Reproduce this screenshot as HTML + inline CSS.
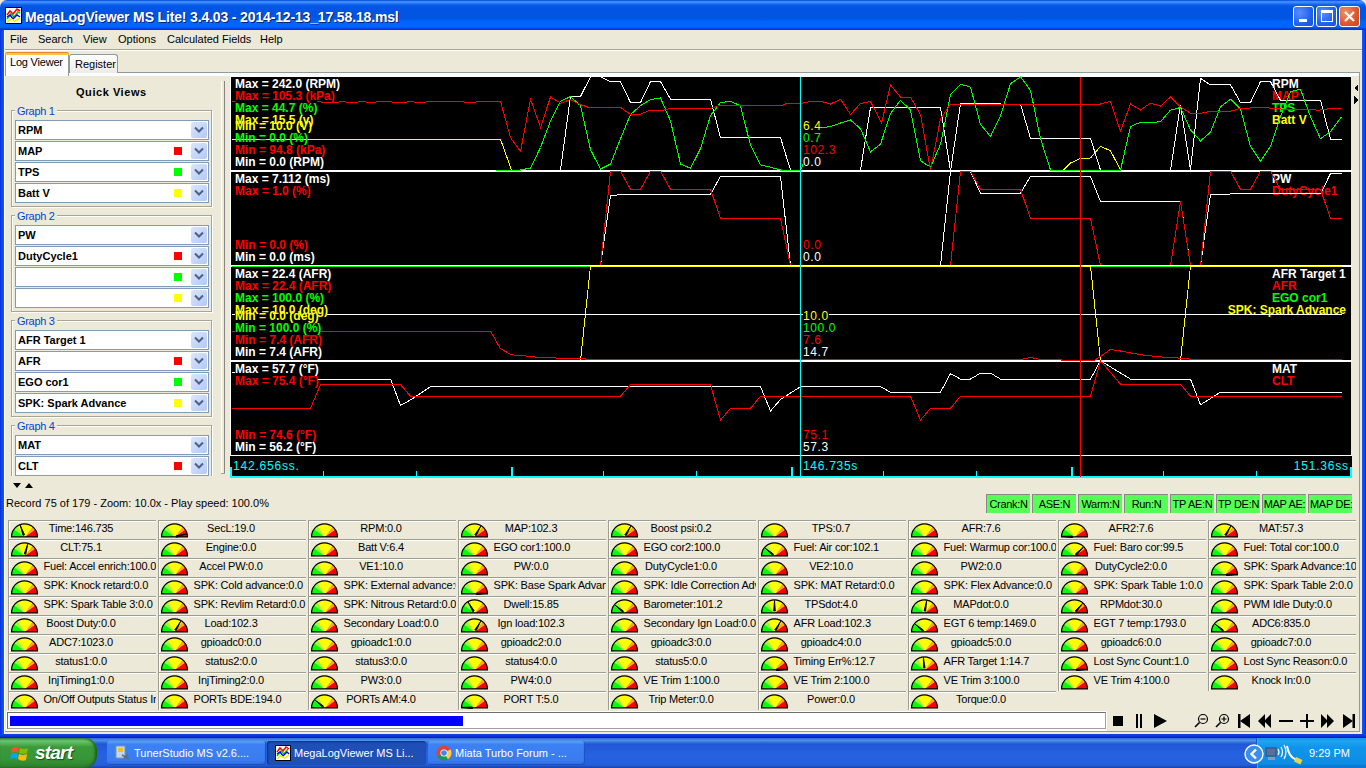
<!DOCTYPE html><html><head><meta charset="utf-8"><style>
*{margin:0;padding:0;box-sizing:border-box}
html,body{width:1366px;height:768px;overflow:hidden;background:#ECE9D8;font-family:"Liberation Sans",sans-serif;font-size:11px;color:#000}
.a{position:absolute}
.t{position:absolute;white-space:nowrap}
.cb{position:absolute;left:15px;width:194px;height:20px;border:1px solid #7F9DB9;background:#fff;font-weight:bold;font-size:11px;padding:4px 0 0 2px;line-height:11px}
.cb .dd{position:absolute;right:1px;top:1px;width:16px;height:16px;border-radius:2px;background:linear-gradient(135deg,#dbe6fd,#b3c8f5)}
.cb .sq{position:absolute;left:158px;top:5px;width:8px;height:8px}
.gb{position:absolute;left:11px;width:201px;height:97px;border:1px solid #A8A593;box-shadow:inset 1px 1px #fff,1px 1px #fff}
.gl{position:absolute;left:3px;top:-6px;letter-spacing:-0.3px;background:#ECE9D8;color:#0046D5;padding:0 2px;font-size:11px;line-height:12px}
.cell{position:absolute;width:150px;height:19px;border-top:1px solid #9d9d92;border-left:1px solid #9d9d92;box-shadow:inset 1px 1px #fff}
.cell span{position:absolute;top:1px;line-height:12px;white-space:nowrap;font-size:11px;letter-spacing:-0.2px}
.ind{position:absolute;top:494px;width:44px;height:19px;background:#55FF55;border-top:1px solid #888;border-left:1px solid #888;font-size:11px;line-height:12px;padding-top:3px;text-align:center;white-space:nowrap;overflow:hidden;letter-spacing:-0.3px}
.cl{font-weight:bold;font-size:12px;line-height:12px}
</style></head><body>
<div class="a" style="left:0;top:0;width:1366px;height:30px;background:linear-gradient(#0040E0 0px,#3C8CFF 1.5px,#3A88FF 2.5px,#0A5CEA 5px,#0055E2 8px,#0054E0 17px,#005CEE 20px,#0066FF 22px,#0064FD 27px,#0048E0 28.5px,#0030C0 30px);border-radius:7px 7px 0 0"></div><svg class="a" style="left:5px;top:7px" width="17" height="17" viewBox="0 0 17 17"><rect x="0.5" y="0.5" width="16" height="16" fill="#fff" stroke="#000"/><polyline points="2,8 5,4 8,7 12,2 15,4" fill="none" stroke="#f00" stroke-width="1.6"/><polyline points="2,12 6,7 9,10 13,5 15,6" fill="none" stroke="#0c0" stroke-width="1.6"/><polyline points="2,10 5,8 8,12 12,8 15,10" fill="none" stroke="#00f" stroke-width="1.4"/><polyline points="2,15 6,12 10,14 15,11" fill="none" stroke="#ee0" stroke-width="1.6"/></svg><div class="t" style="left:25px;top:9px;color:#fff;font-weight:bold;font-size:14px;line-height:17px;letter-spacing:-0.15px;text-shadow:1px 1px #0A1E7A">MegaLogViewer MS Lite! 3.4.03 - 2014-12-13_17.58.18.msl</div><div class="a" style="left:1293px;top:6px;width:21px;height:21px;border:1px solid #fff;border-radius:3px;background:radial-gradient(circle at 30% 30%,#5b8ffb,#2260f0 60%,#1a4fd6)"><div class="a" style="left:5px;top:12px;width:8px;height:3px;background:#fff"></div></div><div class="a" style="left:1316px;top:6px;width:21px;height:21px;border:1px solid #fff;border-radius:3px;background:radial-gradient(circle at 30% 30%,#5b8ffb,#2260f0 60%,#1a4fd6)"><div class="a" style="left:4px;top:3px;width:12px;height:12px;border:1px solid #fff;border-top-width:3px"></div></div><div class="a" style="left:1339px;top:6px;width:21px;height:21px;border:1px solid #fff;border-radius:3px;background:radial-gradient(circle at 30% 30%,#f3906b,#e2532a 60%,#c8451f)"><svg class="a" style="left:3px;top:3px" width="13" height="13"><path d="M2,2 L11,11 M11,2 L2,11" stroke="#fff" stroke-width="2.2"/></svg></div><div class="a" style="left:0;top:30px;width:4px;height:708px;background:linear-gradient(90deg,#0831D9,#0F48EA 50%,#1757F5)"></div><div class="a" style="left:1362px;top:30px;width:4px;height:708px;background:linear-gradient(90deg,#1757F5,#0F48EA 50%,#0831D9)"></div><div class="a" style="left:0;top:734px;width:1366px;height:4px;background:linear-gradient(#0F48EA,#0831D9 60%,#001EA0)"></div><div class="a" style="left:4px;top:30px;width:1px;height:704px;background:#fff"></div><div class="t" style="left:10px;top:33px;font-size:11px;line-height:12px">File</div><div class="t" style="left:38px;top:33px;font-size:11px;line-height:12px">Search</div><div class="t" style="left:83px;top:33px;font-size:11px;line-height:12px">View</div><div class="t" style="left:118px;top:33px;font-size:11px;line-height:12px">Options</div><div class="t" style="left:167px;top:33px;font-size:11px;line-height:12px">Calculated Fields</div><div class="t" style="left:260px;top:33px;font-size:11px;line-height:12px">Help</div><div class="a" style="left:5px;top:49px;width:1357px;height:1px;background:#AAA58F"></div><div class="a" style="left:5px;top:50px;width:1357px;height:1px;background:#fff"></div><div class="a" style="left:5px;top:72px;width:1355px;height:1px;background:#919B9C"></div><div class="a" style="left:5px;top:73px;width:1354px;height:3px;background:#FCFCFE"></div><div class="a" style="left:69px;top:54px;width:49px;height:19px;border:1px solid #919B9C;border-bottom:none;border-radius:3px 3px 0 0;background:linear-gradient(#fff,#ECEBE6)"></div><div class="t" style="left:75px;top:58px">Register</div><div class="a" style="left:5px;top:52px;width:64px;height:24px;border:1px solid #919B9C;border-bottom:none;border-top:none;border-radius:3px 3px 0 0;background:#FCFCFE"></div><div class="a" style="left:5px;top:52px;width:64px;height:3px;background:#FFC83C;border-radius:3px 3px 0 0;border-top:1px solid #E68B2C"></div><div class="t" style="left:10px;top:56px;letter-spacing:-0.2px">Log Viewer</div><div class="a" style="left:1359px;top:73px;width:1px;height:659px;background:#919B9C"></div><div class="a" style="left:5px;top:731px;width:1354px;height:1px;background:#919B9C"></div><div class="t" style="left:76px;top:86px;font-weight:bold;font-size:11px;line-height:12px;letter-spacing:0.55px">Quick Views</div><div class="a" style="left:5px;top:76px;width:216px;height:400px;overflow:hidden"><div class="gb" style="left:6px;top:34px"><div class="gl">Graph 1</div></div><div class="cb" style="left:10px;top:44px">RPM<div class="dd"><svg class="a" style="left:3px;top:4px" width="10" height="8"><path d="M1,1.5 L5,5.5 L9,1.5" fill="none" stroke="#4D6185" stroke-width="2"/></svg></div></div><div class="cb" style="left:10px;top:65px">MAP<div class="sq" style="background:#f00"></div><div class="dd"><svg class="a" style="left:3px;top:4px" width="10" height="8"><path d="M1,1.5 L5,5.5 L9,1.5" fill="none" stroke="#4D6185" stroke-width="2"/></svg></div></div><div class="cb" style="left:10px;top:86px">TPS<div class="sq" style="background:#0f0"></div><div class="dd"><svg class="a" style="left:3px;top:4px" width="10" height="8"><path d="M1,1.5 L5,5.5 L9,1.5" fill="none" stroke="#4D6185" stroke-width="2"/></svg></div></div><div class="cb" style="left:10px;top:107px">Batt V<div class="sq" style="background:#ff0"></div><div class="dd"><svg class="a" style="left:3px;top:4px" width="10" height="8"><path d="M1,1.5 L5,5.5 L9,1.5" fill="none" stroke="#4D6185" stroke-width="2"/></svg></div></div><div class="gb" style="left:6px;top:139px"><div class="gl">Graph 2</div></div><div class="cb" style="left:10px;top:149px">PW<div class="dd"><svg class="a" style="left:3px;top:4px" width="10" height="8"><path d="M1,1.5 L5,5.5 L9,1.5" fill="none" stroke="#4D6185" stroke-width="2"/></svg></div></div><div class="cb" style="left:10px;top:170px">DutyCycle1<div class="sq" style="background:#f00"></div><div class="dd"><svg class="a" style="left:3px;top:4px" width="10" height="8"><path d="M1,1.5 L5,5.5 L9,1.5" fill="none" stroke="#4D6185" stroke-width="2"/></svg></div></div><div class="cb" style="left:10px;top:191px"><div class="sq" style="background:#0f0"></div><div class="dd"><svg class="a" style="left:3px;top:4px" width="10" height="8"><path d="M1,1.5 L5,5.5 L9,1.5" fill="none" stroke="#4D6185" stroke-width="2"/></svg></div></div><div class="cb" style="left:10px;top:212px"><div class="sq" style="background:#ff0"></div><div class="dd"><svg class="a" style="left:3px;top:4px" width="10" height="8"><path d="M1,1.5 L5,5.5 L9,1.5" fill="none" stroke="#4D6185" stroke-width="2"/></svg></div></div><div class="gb" style="left:6px;top:244px"><div class="gl">Graph 3</div></div><div class="cb" style="left:10px;top:254px">AFR Target 1<div class="dd"><svg class="a" style="left:3px;top:4px" width="10" height="8"><path d="M1,1.5 L5,5.5 L9,1.5" fill="none" stroke="#4D6185" stroke-width="2"/></svg></div></div><div class="cb" style="left:10px;top:275px">AFR<div class="sq" style="background:#f00"></div><div class="dd"><svg class="a" style="left:3px;top:4px" width="10" height="8"><path d="M1,1.5 L5,5.5 L9,1.5" fill="none" stroke="#4D6185" stroke-width="2"/></svg></div></div><div class="cb" style="left:10px;top:296px">EGO cor1<div class="sq" style="background:#0f0"></div><div class="dd"><svg class="a" style="left:3px;top:4px" width="10" height="8"><path d="M1,1.5 L5,5.5 L9,1.5" fill="none" stroke="#4D6185" stroke-width="2"/></svg></div></div><div class="cb" style="left:10px;top:317px">SPK: Spark Advance<div class="sq" style="background:#ff0"></div><div class="dd"><svg class="a" style="left:3px;top:4px" width="10" height="8"><path d="M1,1.5 L5,5.5 L9,1.5" fill="none" stroke="#4D6185" stroke-width="2"/></svg></div></div><div class="gb" style="left:6px;top:349px"><div class="gl">Graph 4</div></div><div class="cb" style="left:10px;top:359px">MAT<div class="dd"><svg class="a" style="left:3px;top:4px" width="10" height="8"><path d="M1,1.5 L5,5.5 L9,1.5" fill="none" stroke="#4D6185" stroke-width="2"/></svg></div></div><div class="cb" style="left:10px;top:380px">CLT<div class="sq" style="background:#f00"></div><div class="dd"><svg class="a" style="left:3px;top:4px" width="10" height="8"><path d="M1,1.5 L5,5.5 L9,1.5" fill="none" stroke="#4D6185" stroke-width="2"/></svg></div></div><div class="cb" style="left:10px;top:401px"><div class="dd"><svg class="a" style="left:3px;top:4px" width="10" height="8"><path d="M1,1.5 L5,5.5 L9,1.5" fill="none" stroke="#4D6185" stroke-width="2"/></svg></div></div><div class="cb" style="left:10px;top:422px"><div class="dd"><svg class="a" style="left:3px;top:4px" width="10" height="8"><path d="M1,1.5 L5,5.5 L9,1.5" fill="none" stroke="#4D6185" stroke-width="2"/></svg></div></div></div><div class="a" style="left:221px;top:81px;width:1px;height:393px;background:#fff"></div><div class="a" style="left:224px;top:81px;width:1px;height:393px;background:#858585"></div><div class="a" style="left:221px;top:473px;width:4px;height:1px;background:#A0A0A0"></div><svg class="a" style="left:13px;top:483px" width="24" height="6"><path d="M0,0 L8,0 L4,5Z M12,5 L20,5 L16,0Z" fill="#000"/></svg><svg class="a" style="left:230px;top:76px" width="1130" height="402" viewBox="230 76 1130 402" shape-rendering="crispEdges"><rect x="231" y="77" width="1120" height="378" fill="#000"/><rect x="230" y="76" width="1" height="380" fill="#fff"/><rect x="230" y="76" width="1122" height="1" fill="#fff"/><rect x="231" y="170" width="1121" height="1.5" fill="#fff"/><rect x="231" y="265" width="1121" height="1.5" fill="#fff"/><rect x="231" y="360" width="1121" height="1.5" fill="#fff"/><rect x="231" y="455" width="1121" height="1.5" fill="#fff"/><rect x="1352" y="77" width="6" height="400" fill="#ECE9D8"/><path d="M1358,84 L1354,88 L1358,92Z M1354,96 L1358,100 L1354,104Z" fill="#000"/><rect x="230" y="456" width="1122" height="21" fill="#000"/><rect x="230" y="476" width="1122" height="1.5" fill="#0ff"/><rect x="230" y="467" width="2" height="10" fill="#0ff"/><rect x="511" y="467" width="2" height="10" fill="#0ff"/><rect x="791" y="467" width="2" height="10" fill="#0ff"/><rect x="1071" y="467" width="2" height="10" fill="#0ff"/><rect x="1350" y="467" width="2" height="10" fill="#0ff"/><rect x="323" y="471" width="1" height="6" fill="#0ff"/><rect x="416" y="471" width="1" height="6" fill="#0ff"/><rect x="603" y="471" width="1" height="6" fill="#0ff"/><rect x="696" y="471" width="1" height="6" fill="#0ff"/><rect x="883" y="471" width="1" height="6" fill="#0ff"/><rect x="976" y="471" width="1" height="6" fill="#0ff"/><rect x="1163" y="471" width="1" height="6" fill="#0ff"/><rect x="1256" y="471" width="1" height="6" fill="#0ff"/></svg><div class="t" style="left:1272px;top:78px;color:#fff;font-weight:bold;font-size:12px;line-height:13px;">RPM</div><div class="t" style="left:1272px;top:90px;color:#f00;font-weight:bold;font-size:12px;line-height:13px;">MAP</div><div class="t" style="left:1272px;top:102px;color:#0f0;font-weight:bold;font-size:12px;line-height:13px;">TPS</div><div class="t" style="left:1272px;top:114px;color:#ff0;font-weight:bold;font-size:12px;line-height:13px;">Batt V</div><div class="t" style="left:1272px;top:173px;color:#fff;font-weight:bold;font-size:12px;line-height:13px;">PW</div><div class="t" style="left:1272px;top:185px;color:#f00;font-weight:bold;font-size:12px;line-height:13px;">DutyCycle1</div><div class="t" style="left:1272px;top:268px;color:#fff;font-weight:bold;font-size:12px;line-height:13px;">AFR Target 1</div><div class="t" style="left:1272px;top:280px;color:#f00;font-weight:bold;font-size:12px;line-height:13px;">AFR</div><div class="t" style="left:1272px;top:292px;color:#0f0;font-weight:bold;font-size:12px;line-height:13px;">EGO cor1</div><div class="t" style="left:1272px;top:363px;color:#fff;font-weight:bold;font-size:12px;line-height:13px;">MAT</div><div class="t" style="left:1272px;top:375px;color:#f00;font-weight:bold;font-size:12px;line-height:13px;">CLT</div><div class="t" style="right:20px;top:304px;color:#ff0;font-weight:bold;font-size:12px;line-height:13px;">SPK: Spark Advance</div><svg class="a" style="left:230px;top:76px" width="1130" height="402" viewBox="230 76 1130 402" shape-rendering="crispEdges"><polyline points="231.5,139.4 500.5,139.4 511.5,170" fill="none" stroke="#ff0" stroke-width="1"/><polyline points="1063.5,170 1070.5,163 1080.5,158.5 1090.5,158 1100.5,146.4 1110.5,150.8 1120.5,170" fill="none" stroke="#ff0" stroke-width="1"/><polyline points="560.5,170 570.5,96.5 580.5,96.5 590.5,76.8 600.5,76.8 610.5,81.6 620.5,81.6 630.5,102.5 640.5,102.5 650.5,81.6 660.5,81.6 670.5,99.2 710.5,99.2 720.5,137.6 780.5,137.6 790.5,170 860.5,170 870.5,107.5 940.5,107.5 950.5,171 960.5,103.6 1020.5,104.2 1030.5,138.3 1090.5,138.3 1100.5,170 1170.5,170 1180.5,104.7 1190.5,170 1200.5,78.3 1210.5,84.9 1230.5,84.9 1240.5,102.5 1250.5,102.5 1260.5,81.6 1270.5,81.6 1280.5,100.3 1320.5,100.3 1330.5,139.1 1341.5,139.1" fill="none" stroke="#fff" stroke-width="1"/><polyline points="495.5,170 520.5,170 530.5,168 540.5,147.5 550.5,121 560.5,101.4 570.5,96.5 580.5,105.7 590.5,149.7 600.5,169 610.5,164 620.5,138.7 630.5,114.5 640.5,105.7 650.5,99.6 660.5,98 670.5,121 680.5,164 690.5,168.3 700.5,148.6 710.5,115.6 720.5,102.5 730.5,101.4 740.5,105.7 750.5,145.3 760.5,165 770.5,167.2 780.5,170 800.5,170 810.5,148 820.5,127.7 830.5,126.6 840.5,123 850.5,120 860.5,128.8 870.5,151.9 880.5,144.2 890.5,113.4 900.5,100.3 910.5,110.1 920.5,160.7 930.5,167.2 940.5,144.2 950.5,94.8 960.5,84.2 970.5,87.1 980.5,124.4 990.5,136.5 1000.5,115.6 1010.5,83.8 1020.5,76.8 1030.5,90.4 1040.5,138.7 1050.5,170 1120.5,170 1130.5,126.6 1140.5,122.2 1150.5,122.9 1160.5,121.6 1170.5,110.1 1180.5,107.5 1190.5,129.9 1200.5,140.9 1210.5,132.1 1220.5,106.8 1230.5,99.2 1240.5,109 1250.5,146.4 1260.5,161.1 1270.5,146.4 1280.5,116.7 1290.5,91.5 1300.5,89.3 1310.5,116.7 1320.5,138.7 1330.5,131.7 1341.5,116.7" fill="none" stroke="#0f0" stroke-width="1"/><polyline points="231.5,101 234.5,101" fill="none" stroke="#f00" stroke-width="1"/><polyline points="316.5,101.7 333.5,103 342.5,101.4 351.5,103 362.5,101.4 371.5,103 379.5,101.4 390.5,101.8 401.5,103 410.5,101.4 419.5,103 430.5,101.4 460.5,101.4 469.5,103 480.5,101.4 500.5,101.4 510.5,137.6 520.5,151.4 530.5,99.2 540.5,127.3 550.5,97 560.5,103.1 570.5,99.6 580.5,104.7 590.5,108 605.5,107.3 620.5,107.3 630.5,114.5 640.5,114.1 650.5,110.1 663.5,110.1 670.5,108.4 710.5,108.4 720.5,105.3 782.5,105.3 786.5,103.6 800.5,103.6 810.5,101.4 820.5,101.4 830.5,104 840.5,99.2 850.5,114.5 860.5,103.6 870.5,101.4 881.5,123.3 890.5,84.9 900.5,97 910.5,97 920.5,114.5 930.5,169.9 940.5,118.9 950.5,104 1100.5,104 1110.5,101.4 1120.5,131 1130.5,104 1140.5,110.1 1150.5,103.1 1160.5,106.2 1170.5,97 1180.5,106.8 1190.5,113.4 1200.5,113.4 1210.5,111.2 1230.5,111.2 1240.5,108.4 1262.5,107.5 1280.5,109 1319.5,110.1 1330.5,108.4 1341.5,108.4" fill="none" stroke="#f00" stroke-width="1"/><polyline points="600.5,265.5 610.5,195.5 625.5,194.4 710.5,194.4 720.5,176.3 780.5,176.3 790.5,265.5 940.5,265.5 950.5,171.3 970.5,171.3 980.5,193.3 1020.5,193.3 1030.5,176.3 1090.5,176.3 1100.5,201.4 1180.5,201.4 1190.5,265.5 1200.5,265.5 1210.5,194.4 1235.5,193.9 1320.5,193.9 1330.5,173.5 1341.5,173.5" fill="none" stroke="#fff" stroke-width="1"/><polyline points="600.5,265.5 610.5,171.3 620.5,171.3 630.5,189.3 640.5,189.3 650.5,171.3 660.5,171.3 670.5,189.3 710.5,189.3 720.5,218.5 780.5,218.5 790.5,265.5 950.5,265.5 960.5,171.3 970.5,171.3 980.5,189.3 1020.5,189.3 1030.5,218.5 1090.5,218.5 1100.5,265.5 1170.5,265.5 1180.5,201.4 1190.5,265.5 1200.5,265.5 1210.5,171.3 1230.5,171.3 1240.5,189.3 1250.5,189.3 1260.5,171.3 1270.5,171.3 1280.5,189.3 1320.5,189.3 1330.5,218.5 1341.5,218.5" fill="none" stroke="#f00" stroke-width="1"/><polyline points="231.5,266 1341.5,266" fill="none" stroke="#0f0" stroke-width="1"/><polyline points="580.5,360.5 590.5,266 1090.5,266 1100.5,360.5 1180.5,360.5 1190.5,266 1341.5,266" fill="none" stroke="#ff0" stroke-width="1"/><polyline points="231.5,314.3 234.5,314.3" fill="none" stroke="#fff" stroke-width="1"/><polyline points="326.5,314.3 1341.5,314.3" fill="none" stroke="#fff" stroke-width="1"/><polyline points="231.5,331.5 234.5,331.5" fill="none" stroke="#f00" stroke-width="1"/><polyline points="320.5,331.5 344.5,331.8 355.5,331.2 490.5,331.2 500.5,348.8 510.5,354.2 515.5,355.3 525.5,356 535.5,357.1 555.5,358 584.5,358.5 586.5,359.5 1020.5,359.5 1030.5,357.5 1040.5,359.5 1060.5,359.5 1062.5,360.5 1094.5,360.5 1110.5,349.4 1120.5,351 1140.5,354.7 1160.5,356.9 1180.5,358.2 1194.5,359.5 1341.5,359.5" fill="none" stroke="#f00" stroke-width="1"/><polyline points="231.5,372.5 234.5,372.5" fill="none" stroke="#fff" stroke-width="1"/><polyline points="316.5,379 390.5,379 400.5,405.4 410.5,399.9 430.5,386.7 760.5,386.7 770.5,410.9 780.5,399.5 790.5,393 800.5,386.7 880.5,386.7 890.5,392.2 940.5,392.2 950.5,373.6 960.5,379.1 970.5,379.1 980.5,373.1 990.5,373.1 1000.5,379.1 1090.5,379.1 1100.5,360.8 1130.5,379.1 1190.5,379.1 1200.5,404.8 1220.5,392.2 1341.5,392.2" fill="none" stroke="#fff" stroke-width="1"/><polyline points="231.5,408.3 310.5,408.3 320.5,384.6 400.5,384.6 410.5,396.2 620.5,396.2 630.5,384.6 710.5,384.6 720.5,420.1 730.5,408.3 750.5,408.3 760.5,396.2 910.5,396.2 920.5,420.1 930.5,408.3 950.5,408.3 960.5,396.2 1090.5,396.2 1100.5,360.8 1120.5,384.1 1180.5,384.1 1190.5,396.2 1341.5,396.2" fill="none" stroke="#f00" stroke-width="1"/><rect x="231" y="265" width="1121" height="1" fill="#fff"/><rect x="1101" y="360" width="80" height="2" fill="#fff"/><rect x="800" y="77" width="1" height="400" fill="#0ff"/><rect x="1080" y="77" width="1" height="400" fill="#f00"/></svg><div class="t" style="left:235px;top:78px;color:#fff;font-weight:bold;font-size:12px;line-height:13px;">Max = 242.0 (RPM)</div><div class="t" style="left:235px;top:90px;color:#f00;font-weight:bold;font-size:12px;line-height:13px;">Max = 105.3 (kPa)</div><div class="t" style="left:235px;top:102px;color:#0f0;font-weight:bold;font-size:12px;line-height:13px;">Max = 44.7 (%)</div><div class="t" style="left:235px;top:114px;color:#ff0;font-weight:bold;font-size:12px;line-height:13px;">Max = 15.5 (v)</div><div class="t" style="left:235px;top:120px;color:#ff0;font-weight:bold;font-size:12px;line-height:13px;">Min = 10.0 (V)</div><div class="t" style="left:235px;top:132px;color:#0f0;font-weight:bold;font-size:12px;line-height:13px;">Min = 0.0 (%)</div><div class="t" style="left:235px;top:144px;color:#f00;font-weight:bold;font-size:12px;line-height:13px;">Min = 94.8 (kPa)</div><div class="t" style="left:235px;top:156px;color:#fff;font-weight:bold;font-size:12px;line-height:13px;">Min = 0.0 (RPM)</div><div class="t" style="left:235px;top:173px;color:#fff;font-weight:bold;font-size:12px;line-height:13px;">Max = 7.112 (ms)</div><div class="t" style="left:235px;top:185px;color:#f00;font-weight:bold;font-size:12px;line-height:13px;">Max = 1.0 (%)</div><div class="t" style="left:235px;top:239px;color:#f00;font-weight:bold;font-size:12px;line-height:13px;">Min = 0.0 (%)</div><div class="t" style="left:235px;top:251px;color:#fff;font-weight:bold;font-size:12px;line-height:13px;">Min = 0.0 (ms)</div><div class="t" style="left:235px;top:268px;color:#fff;font-weight:bold;font-size:12px;line-height:13px;">Max = 22.4 (AFR)</div><div class="t" style="left:235px;top:280px;color:#f00;font-weight:bold;font-size:12px;line-height:13px;">Max = 22.4 (AFR)</div><div class="t" style="left:235px;top:292px;color:#0f0;font-weight:bold;font-size:12px;line-height:13px;">Max = 100.0 (%)</div><div class="t" style="left:235px;top:304px;color:#ff0;font-weight:bold;font-size:12px;line-height:13px;">Max = 10.0 (deg)</div><div class="t" style="left:235px;top:310px;color:#ff0;font-weight:bold;font-size:12px;line-height:13px;">Min = 0.0 (deg)</div><div class="t" style="left:235px;top:322px;color:#0f0;font-weight:bold;font-size:12px;line-height:13px;">Min = 100.0 (%)</div><div class="t" style="left:235px;top:334px;color:#f00;font-weight:bold;font-size:12px;line-height:13px;">Min = 7.4 (AFR)</div><div class="t" style="left:235px;top:346px;color:#fff;font-weight:bold;font-size:12px;line-height:13px;">Min = 7.4 (AFR)</div><div class="t" style="left:235px;top:363px;color:#fff;font-weight:bold;font-size:12px;line-height:13px;">Max = 57.7 (°F)</div><div class="t" style="left:235px;top:375px;color:#f00;font-weight:bold;font-size:12px;line-height:13px;">Max = 75.4 (°F)</div><div class="t" style="left:235px;top:429px;color:#f00;font-weight:bold;font-size:12px;line-height:13px;">Min = 74.6 (°F)</div><div class="t" style="left:235px;top:441px;color:#fff;font-weight:bold;font-size:12px;line-height:13px;">Min = 56.2 (°F)</div><div class="t" style="left:803px;top:120px;color:#ff0;font-size:12px;line-height:13px;background:#000;letter-spacing:0.6px;">6.4</div><div class="t" style="left:803px;top:132px;color:#0f0;font-size:12px;line-height:13px;background:#000;letter-spacing:0.6px;">0.7</div><div class="t" style="left:803px;top:144px;color:#f00;font-size:12px;line-height:13px;background:#000;letter-spacing:0.6px;">102.3</div><div class="t" style="left:803px;top:156px;color:#fff;font-size:12px;line-height:13px;background:#000;letter-spacing:0.6px;">0.0</div><div class="t" style="left:803px;top:239px;color:#f00;font-size:12px;line-height:13px;background:#000;letter-spacing:0.6px;">0.0</div><div class="t" style="left:803px;top:251px;color:#fff;font-size:12px;line-height:13px;background:#000;letter-spacing:0.6px;">0.0</div><div class="t" style="left:803px;top:310px;color:#ff0;font-size:12px;line-height:13px;background:#000;letter-spacing:0.6px;">10.0</div><div class="t" style="left:803px;top:322px;color:#0f0;font-size:12px;line-height:13px;background:#000;letter-spacing:0.6px;">100.0</div><div class="t" style="left:803px;top:334px;color:#f00;font-size:12px;line-height:13px;background:#000;letter-spacing:0.6px;">7.6</div><div class="t" style="left:803px;top:346px;color:#fff;font-size:12px;line-height:13px;background:#000;letter-spacing:0.6px;">14.7</div><div class="t" style="left:803px;top:429px;color:#f00;font-size:12px;line-height:13px;background:#000;letter-spacing:0.6px;">75.1</div><div class="t" style="left:803px;top:441px;color:#fff;font-size:12px;line-height:13px;background:#000;letter-spacing:0.6px;">57.3</div><div class="t" style="left:233px;top:460px;color:#0ff;font-size:12px;line-height:13px;letter-spacing:0.8px;">142.656ss.</div><div class="t" style="left:803px;top:460px;color:#0ff;font-size:12px;line-height:13px;letter-spacing:0.7px;">146.735s</div><div class="t" style="right:13px;top:460px;color:#0ff;font-size:12px;line-height:13px;letter-spacing:0.8px;">151.36ss.</div><div class="t" style="left:6px;top:497px;font-size:11px;line-height:12px">Record 75 of 179 - Zoom: 10.0x - Play speed: 100.0%</div><div class="ind" style="left:986px;width:44px;">Crank:N</div><div class="ind" style="left:1032px;width:44px;">ASE:N</div><div class="ind" style="left:1078px;width:44px;">Warm:N</div><div class="ind" style="left:1124px;width:44px;">Run:N</div><div class="ind" style="left:1170px;width:44px;">TP AE:N</div><div class="ind" style="left:1216px;width:44px;">TP DE:N</div><div class="ind" style="left:1262px;width:44px;">MAP AE:</div><div class="ind" style="left:1308px;width:44px;text-align:left;padding-left:1px;">MAP DE:N</div><svg width="0" height="0" style="position:absolute"><defs><g id="gg"><path d="M0,0 L13.00,-0.00 A13,13 0 0,0 10.65,-7.46Z" fill="#f00"/><path d="M0,0 L10.65,-7.46 A13,13 0 0,0 8.00,-10.24Z" fill="#FFAA00"/><path d="M0,0 L8.00,-10.24 A13,13 0 0,0 -6.89,-11.02Z" fill="#ff0"/><path d="M0,0 L-6.89,-11.02 A13,13 0 0,0 -10.52,-7.64Z" fill="#99FF33"/><path d="M0,0 L-10.52,-7.64 A13,13 0 0,0 -13.00,-0.00Z" fill="#0f0"/><path d="M-13,-0.2 A13,13 0 0,1 13,-0.2 Z" fill="none" stroke="#000" stroke-width="1.3"/></g></defs></svg><div class="cell" style="left:8px;top:520px;width:148px;overflow:hidden"><svg class="a" style="left:2px;top:2px" width="27" height="15" viewBox="-13.5 -14 27 15"><use href="#gg"/><path d="M0.07,-2.15 L-4.28,-11.75 L-1.44,-1.61Z" stroke="#000" stroke-width="0.9" fill="#000"/></svg><span style="left:39.8px">Time:146.735</span></div><div class="cell" style="left:158px;top:520px;width:148px;overflow:hidden"><svg class="a" style="left:2px;top:2px" width="27" height="15" viewBox="-13.5 -14 27 15"><use href="#gg"/><path d="M2.14,0.26 L12.07,-3.24 L1.72,-1.29Z" stroke="#000" stroke-width="0.9" fill="#000"/></svg><span style="left:48.1px">SecL:19.0</span></div><div class="cell" style="left:308px;top:520px;width:148px;overflow:hidden"><svg class="a" style="left:2px;top:2px" width="27" height="15" viewBox="-13.5 -14 27 15"><use href="#gg"/></svg><span style="left:51.3px">RPM:0.0</span></div><div class="cell" style="left:458px;top:520px;width:148px;overflow:hidden"><svg class="a" style="left:2px;top:2px" width="27" height="15" viewBox="-13.5 -14 27 15"><use href="#gg"/><path d="M1.69,-1.33 L6.25,-10.83 L0.31,-2.13Z" stroke="#000" stroke-width="0.9" fill="#000"/></svg><span style="left:45.7px">MAP:102.3</span></div><div class="cell" style="left:608px;top:520px;width:148px;overflow:hidden"><svg class="a" style="left:2px;top:2px" width="27" height="15" viewBox="-13.5 -14 27 15"><use href="#gg"/><path d="M1.69,-1.33 L6.25,-10.83 L0.31,-2.13Z" stroke="#000" stroke-width="0.9" fill="#000"/></svg><span style="left:41.5px">Boost psi:0.2</span></div><div class="cell" style="left:758px;top:520px;width:148px;overflow:hidden"><svg class="a" style="left:2px;top:2px" width="27" height="15" viewBox="-13.5 -14 27 15"><use href="#gg"/></svg><span style="left:52.8px">TPS:0.7</span></div><div class="cell" style="left:908px;top:520px;width:148px;overflow:hidden"><svg class="a" style="left:2px;top:2px" width="27" height="15" viewBox="-13.5 -14 27 15"><use href="#gg"/></svg><span style="left:52.5px">AFR:7.6</span></div><div class="cell" style="left:1058px;top:520px;width:148px;overflow:hidden"><svg class="a" style="left:2px;top:2px" width="27" height="15" viewBox="-13.5 -14 27 15"><use href="#gg"/><path d="M-1.96,-0.90 L-12.48,-0.65 L-2.04,0.69Z" stroke="#000" stroke-width="0.9" fill="#000"/></svg><span style="left:49.6px">AFR2:7.6</span></div><div class="cell" style="left:1208px;top:520px;width:148px;overflow:hidden"><svg class="a" style="left:2px;top:2px" width="27" height="15" viewBox="-13.5 -14 27 15"><use href="#gg"/><path d="M1.69,-1.33 L6.25,-10.83 L0.31,-2.13Z" stroke="#000" stroke-width="0.9" fill="#000"/></svg><span style="left:50.0px">MAT:57.3</span></div><div class="cell" style="left:8px;top:539px;width:148px;overflow:hidden"><svg class="a" style="left:2px;top:2px" width="27" height="15" viewBox="-13.5 -14 27 15"><use href="#gg"/><path d="M1.29,-1.72 L3.24,-12.07 L-0.26,-2.14Z" stroke="#000" stroke-width="0.9" fill="#000"/></svg><span style="left:51.2px">CLT:75.1</span></div><div class="cell" style="left:158px;top:539px;width:148px;overflow:hidden"><svg class="a" style="left:2px;top:2px" width="27" height="15" viewBox="-13.5 -14 27 15"><use href="#gg"/></svg><span style="left:46.7px">Engine:0.0</span></div><div class="cell" style="left:308px;top:539px;width:148px;overflow:hidden"><svg class="a" style="left:2px;top:2px" width="27" height="15" viewBox="-13.5 -14 27 15"><use href="#gg"/></svg><span style="left:49.0px">Batt V:6.4</span></div><div class="cell" style="left:458px;top:539px;width:148px;overflow:hidden"><svg class="a" style="left:2px;top:2px" width="27" height="15" viewBox="-13.5 -14 27 15"><use href="#gg"/></svg><span style="left:34.5px">EGO cor1:100.0</span></div><div class="cell" style="left:608px;top:539px;width:148px;overflow:hidden"><svg class="a" style="left:2px;top:2px" width="27" height="15" viewBox="-13.5 -14 27 15"><use href="#gg"/></svg><span style="left:34.5px">EGO cor2:100.0</span></div><div class="cell" style="left:758px;top:539px;width:148px;overflow:hidden"><svg class="a" style="left:2px;top:2px" width="27" height="15" viewBox="-13.5 -14 27 15"><use href="#gg"/><path d="M-1.02,-1.90 L-9.58,-8.03 L-2.05,-0.67Z" stroke="#000" stroke-width="0.9" fill="#000"/></svg><span style="left:34.5px">Fuel: Air cor:102.1</span></div><div class="cell" style="left:908px;top:539px;width:148px;overflow:hidden"><svg class="a" style="left:2px;top:2px" width="27" height="15" viewBox="-13.5 -14 27 15"><use href="#gg"/></svg><span style="left:34.5px">Fuel: Warmup cor:100.0</span></div><div class="cell" style="left:1058px;top:539px;width:148px;overflow:hidden"><svg class="a" style="left:2px;top:2px" width="27" height="15" viewBox="-13.5 -14 27 15"><use href="#gg"/><path d="M1.98,-0.85 L8.84,-8.84 L0.85,-1.98Z" stroke="#000" stroke-width="0.9" fill="#000"/></svg><span style="left:34.5px">Fuel: Baro cor:99.5</span></div><div class="cell" style="left:1208px;top:539px;width:148px;overflow:hidden"><svg class="a" style="left:2px;top:2px" width="27" height="15" viewBox="-13.5 -14 27 15"><use href="#gg"/></svg><span style="left:34.5px">Fuel: Total cor:100.0</span></div><div class="cell" style="left:8px;top:558px;width:148px;overflow:hidden"><svg class="a" style="left:2px;top:2px" width="27" height="15" viewBox="-13.5 -14 27 15"><use href="#gg"/></svg><span style="left:34.5px">Fuel: Accel enrich:100.0</span></div><div class="cell" style="left:158px;top:558px;width:148px;overflow:hidden"><svg class="a" style="left:2px;top:2px" width="27" height="15" viewBox="-13.5 -14 27 15"><use href="#gg"/></svg><span style="left:40.3px">Accel PW:0.0</span></div><div class="cell" style="left:308px;top:558px;width:148px;overflow:hidden"><svg class="a" style="left:2px;top:2px" width="27" height="15" viewBox="-13.5 -14 27 15"><use href="#gg"/></svg><span style="left:50.2px">VE1:10.0</span></div><div class="cell" style="left:458px;top:558px;width:148px;overflow:hidden"><svg class="a" style="left:2px;top:2px" width="27" height="15" viewBox="-13.5 -14 27 15"><use href="#gg"/></svg><span style="left:54.7px">PW:0.0</span></div><div class="cell" style="left:608px;top:558px;width:148px;overflow:hidden"><svg class="a" style="left:2px;top:2px" width="27" height="15" viewBox="-13.5 -14 27 15"><use href="#gg"/></svg><span style="left:36.1px">DutyCycle1:0.0</span></div><div class="cell" style="left:758px;top:558px;width:148px;overflow:hidden"><svg class="a" style="left:2px;top:2px" width="27" height="15" viewBox="-13.5 -14 27 15"><use href="#gg"/></svg><span style="left:50.2px">VE2:10.0</span></div><div class="cell" style="left:908px;top:558px;width:148px;overflow:hidden"><svg class="a" style="left:2px;top:2px" width="27" height="15" viewBox="-13.5 -14 27 15"><use href="#gg"/></svg><span style="left:51.6px">PW2:0.0</span></div><div class="cell" style="left:1058px;top:558px;width:148px;overflow:hidden"><svg class="a" style="left:2px;top:2px" width="27" height="15" viewBox="-13.5 -14 27 15"><use href="#gg"/></svg><span style="left:36.1px">DutyCycle2:0.0</span></div><div class="cell" style="left:1208px;top:558px;width:148px;overflow:hidden"><svg class="a" style="left:2px;top:2px" width="27" height="15" viewBox="-13.5 -14 27 15"><use href="#gg"/><path d="M2.04,0.69 L12.48,-0.65 L1.96,-0.90Z" stroke="#000" stroke-width="0.9" fill="#000"/></svg><span style="left:34.5px">SPK: Spark Advance:10.0</span></div><div class="cell" style="left:8px;top:577px;width:148px;overflow:hidden"><svg class="a" style="left:2px;top:2px" width="27" height="15" viewBox="-13.5 -14 27 15"><use href="#gg"/></svg><span style="left:34.5px">SPK: Knock retard:0.0</span></div><div class="cell" style="left:158px;top:577px;width:148px;overflow:hidden"><svg class="a" style="left:2px;top:2px" width="27" height="15" viewBox="-13.5 -14 27 15"><use href="#gg"/></svg><span style="left:34.5px">SPK: Cold advance:0.0</span></div><div class="cell" style="left:308px;top:577px;width:148px;overflow:hidden"><svg class="a" style="left:2px;top:2px" width="27" height="15" viewBox="-13.5 -14 27 15"><use href="#gg"/></svg><span style="left:34.5px">SPK: External advance:0.0</span></div><div class="cell" style="left:458px;top:577px;width:148px;overflow:hidden"><svg class="a" style="left:2px;top:2px" width="27" height="15" viewBox="-13.5 -14 27 15"><use href="#gg"/><path d="M2.04,0.69 L12.48,-0.65 L1.96,-0.90Z" stroke="#000" stroke-width="0.9" fill="#000"/></svg><span style="left:34.5px">SPK: Base Spark Advance:10.0</span></div><div class="cell" style="left:608px;top:577px;width:148px;overflow:hidden"><svg class="a" style="left:2px;top:2px" width="27" height="15" viewBox="-13.5 -14 27 15"><use href="#gg"/></svg><span style="left:34.5px">SPK: Idle Correction Advance:0.0</span></div><div class="cell" style="left:758px;top:577px;width:148px;overflow:hidden"><svg class="a" style="left:2px;top:2px" width="27" height="15" viewBox="-13.5 -14 27 15"><use href="#gg"/></svg><span style="left:34.5px">SPK: MAT Retard:0.0</span></div><div class="cell" style="left:908px;top:577px;width:148px;overflow:hidden"><svg class="a" style="left:2px;top:2px" width="27" height="15" viewBox="-13.5 -14 27 15"><use href="#gg"/></svg><span style="left:34.5px">SPK: Flex Advance:0.0</span></div><div class="cell" style="left:1058px;top:577px;width:148px;overflow:hidden"><svg class="a" style="left:2px;top:2px" width="27" height="15" viewBox="-13.5 -14 27 15"><use href="#gg"/></svg><span style="left:34.5px">SPK: Spark Table 1:0.0</span></div><div class="cell" style="left:1208px;top:577px;width:148px;overflow:hidden"><svg class="a" style="left:2px;top:2px" width="27" height="15" viewBox="-13.5 -14 27 15"><use href="#gg"/></svg><span style="left:34.5px">SPK: Spark Table 2:0.0</span></div><div class="cell" style="left:8px;top:596px;width:148px;overflow:hidden"><svg class="a" style="left:2px;top:2px" width="27" height="15" viewBox="-13.5 -14 27 15"><use href="#gg"/></svg><span style="left:34.5px">SPK: Spark Table 3:0.0</span></div><div class="cell" style="left:158px;top:596px;width:148px;overflow:hidden"><svg class="a" style="left:2px;top:2px" width="27" height="15" viewBox="-13.5 -14 27 15"><use href="#gg"/></svg><span style="left:34.5px">SPK: Revlim Retard:0.0</span></div><div class="cell" style="left:308px;top:596px;width:148px;overflow:hidden"><svg class="a" style="left:2px;top:2px" width="27" height="15" viewBox="-13.5 -14 27 15"><use href="#gg"/></svg><span style="left:34.5px">SPK: Nitrous Retard:0.0</span></div><div class="cell" style="left:458px;top:596px;width:148px;overflow:hidden"><svg class="a" style="left:2px;top:2px" width="27" height="15" viewBox="-13.5 -14 27 15"><use href="#gg"/><path d="M-0.31,-2.13 L-6.25,-10.83 L-1.69,-1.33Z" stroke="#000" stroke-width="0.9" fill="#000"/></svg><span style="left:44.4px">Dwell:15.85</span></div><div class="cell" style="left:608px;top:596px;width:148px;overflow:hidden"><svg class="a" style="left:2px;top:2px" width="27" height="15" viewBox="-13.5 -14 27 15"><use href="#gg"/><path d="M-1.02,-1.90 L-9.58,-8.03 L-2.05,-0.67Z" stroke="#000" stroke-width="0.9" fill="#000"/></svg><span style="left:34.5px">Barometer:101.2</span></div><div class="cell" style="left:758px;top:596px;width:148px;overflow:hidden"><svg class="a" style="left:2px;top:2px" width="27" height="15" viewBox="-13.5 -14 27 15"><use href="#gg"/><path d="M0.80,-2.00 L0.00,-12.50 L-0.80,-2.00Z" stroke="#000" stroke-width="0.9" fill="#000"/></svg><span style="left:45.5px">TPSdot:4.0</span></div><div class="cell" style="left:908px;top:596px;width:148px;overflow:hidden"><svg class="a" style="left:2px;top:2px" width="27" height="15" viewBox="-13.5 -14 27 15"><use href="#gg"/><path d="M1.14,-1.83 L2.17,-12.31 L-0.44,-2.11Z" stroke="#000" stroke-width="0.9" fill="#000"/></svg><span style="left:44.3px">MAPdot:0.0</span></div><div class="cell" style="left:1058px;top:596px;width:148px;overflow:hidden"><svg class="a" style="left:2px;top:2px" width="27" height="15" viewBox="-13.5 -14 27 15"><use href="#gg"/><path d="M1.90,-1.02 L8.03,-9.58 L0.67,-2.05Z" stroke="#000" stroke-width="0.9" fill="#000"/></svg><span style="left:41.0px">RPMdot:30.0</span></div><div class="cell" style="left:1208px;top:596px;width:148px;overflow:hidden"><svg class="a" style="left:2px;top:2px" width="27" height="15" viewBox="-13.5 -14 27 15"><use href="#gg"/></svg><span style="left:34.5px">PWM Idle Duty:0.0</span></div><div class="cell" style="left:8px;top:615px;width:148px;overflow:hidden"><svg class="a" style="left:2px;top:2px" width="27" height="15" viewBox="-13.5 -14 27 15"><use href="#gg"/></svg><span style="left:37.3px">Boost Duty:0.0</span></div><div class="cell" style="left:158px;top:615px;width:148px;overflow:hidden"><svg class="a" style="left:2px;top:2px" width="27" height="15" viewBox="-13.5 -14 27 15"><use href="#gg"/><path d="M1.69,-1.33 L6.25,-10.83 L0.31,-2.13Z" stroke="#000" stroke-width="0.9" fill="#000"/></svg><span style="left:45.5px">Load:102.3</span></div><div class="cell" style="left:308px;top:615px;width:148px;overflow:hidden"><svg class="a" style="left:2px;top:2px" width="27" height="15" viewBox="-13.5 -14 27 15"><use href="#gg"/></svg><span style="left:34.5px">Secondary Load:0.0</span></div><div class="cell" style="left:458px;top:615px;width:148px;overflow:hidden"><svg class="a" style="left:2px;top:2px" width="27" height="15" viewBox="-13.5 -14 27 15"><use href="#gg"/><path d="M1.69,-1.33 L6.25,-10.83 L0.31,-2.13Z" stroke="#000" stroke-width="0.9" fill="#000"/></svg><span style="left:38.5px">Ign load:102.3</span></div><div class="cell" style="left:608px;top:615px;width:148px;overflow:hidden"><svg class="a" style="left:2px;top:2px" width="27" height="15" viewBox="-13.5 -14 27 15"><use href="#gg"/></svg><span style="left:34.5px">Secondary Ign Load:0.0</span></div><div class="cell" style="left:758px;top:615px;width:148px;overflow:hidden"><svg class="a" style="left:2px;top:2px" width="27" height="15" viewBox="-13.5 -14 27 15"><use href="#gg"/><path d="M1.69,-1.33 L6.25,-10.83 L0.31,-2.13Z" stroke="#000" stroke-width="0.9" fill="#000"/></svg><span style="left:34.5px">AFR Load:102.3</span></div><div class="cell" style="left:908px;top:615px;width:148px;overflow:hidden"><svg class="a" style="left:2px;top:2px" width="27" height="15" viewBox="-13.5 -14 27 15"><use href="#gg"/><path d="M-1.02,-1.90 L-9.58,-8.03 L-2.05,-0.67Z" stroke="#000" stroke-width="0.9" fill="#000"/></svg><span style="left:34.5px">EGT 6 temp:1469.0</span></div><div class="cell" style="left:1058px;top:615px;width:148px;overflow:hidden"><svg class="a" style="left:2px;top:2px" width="27" height="15" viewBox="-13.5 -14 27 15"><use href="#gg"/></svg><span style="left:34.5px">EGT 7 temp:1793.0</span></div><div class="cell" style="left:1208px;top:615px;width:148px;overflow:hidden"><svg class="a" style="left:2px;top:2px" width="27" height="15" viewBox="-13.5 -14 27 15"><use href="#gg"/><path d="M-1.02,-1.90 L-9.58,-8.03 L-2.05,-0.67Z" stroke="#000" stroke-width="0.9" fill="#000"/></svg><span style="left:43.0px">ADC6:835.0</span></div><div class="cell" style="left:8px;top:634px;width:148px;overflow:hidden"><svg class="a" style="left:2px;top:2px" width="27" height="15" viewBox="-13.5 -14 27 15"><use href="#gg"/></svg><span style="left:40.1px">ADC7:1023.0</span></div><div class="cell" style="left:158px;top:634px;width:148px;overflow:hidden"><svg class="a" style="left:2px;top:2px" width="27" height="15" viewBox="-13.5 -14 27 15"><use href="#gg"/></svg><span style="left:41.7px">gpioadc0:0.0</span></div><div class="cell" style="left:308px;top:634px;width:148px;overflow:hidden"><svg class="a" style="left:2px;top:2px" width="27" height="15" viewBox="-13.5 -14 27 15"><use href="#gg"/></svg><span style="left:41.7px">gpioadc1:0.0</span></div><div class="cell" style="left:458px;top:634px;width:148px;overflow:hidden"><svg class="a" style="left:2px;top:2px" width="27" height="15" viewBox="-13.5 -14 27 15"><use href="#gg"/></svg><span style="left:41.7px">gpioadc2:0.0</span></div><div class="cell" style="left:608px;top:634px;width:148px;overflow:hidden"><svg class="a" style="left:2px;top:2px" width="27" height="15" viewBox="-13.5 -14 27 15"><use href="#gg"/></svg><span style="left:41.7px">gpioadc3:0.0</span></div><div class="cell" style="left:758px;top:634px;width:148px;overflow:hidden"><svg class="a" style="left:2px;top:2px" width="27" height="15" viewBox="-13.5 -14 27 15"><use href="#gg"/></svg><span style="left:41.7px">gpioadc4:0.0</span></div><div class="cell" style="left:908px;top:634px;width:148px;overflow:hidden"><svg class="a" style="left:2px;top:2px" width="27" height="15" viewBox="-13.5 -14 27 15"><use href="#gg"/></svg><span style="left:41.7px">gpioadc5:0.0</span></div><div class="cell" style="left:1058px;top:634px;width:148px;overflow:hidden"><svg class="a" style="left:2px;top:2px" width="27" height="15" viewBox="-13.5 -14 27 15"><use href="#gg"/></svg><span style="left:41.7px">gpioadc6:0.0</span></div><div class="cell" style="left:1208px;top:634px;width:148px;overflow:hidden"><svg class="a" style="left:2px;top:2px" width="27" height="15" viewBox="-13.5 -14 27 15"><use href="#gg"/></svg><span style="left:41.7px">gpioadc7:0.0</span></div><div class="cell" style="left:8px;top:653px;width:148px;overflow:hidden"><svg class="a" style="left:2px;top:2px" width="27" height="15" viewBox="-13.5 -14 27 15"><use href="#gg"/></svg><span style="left:46.2px">status1:0.0</span></div><div class="cell" style="left:158px;top:653px;width:148px;overflow:hidden"><svg class="a" style="left:2px;top:2px" width="27" height="15" viewBox="-13.5 -14 27 15"><use href="#gg"/></svg><span style="left:46.2px">status2:0.0</span></div><div class="cell" style="left:308px;top:653px;width:148px;overflow:hidden"><svg class="a" style="left:2px;top:2px" width="27" height="15" viewBox="-13.5 -14 27 15"><use href="#gg"/></svg><span style="left:46.2px">status3:0.0</span></div><div class="cell" style="left:458px;top:653px;width:148px;overflow:hidden"><svg class="a" style="left:2px;top:2px" width="27" height="15" viewBox="-13.5 -14 27 15"><use href="#gg"/></svg><span style="left:46.2px">status4:0.0</span></div><div class="cell" style="left:608px;top:653px;width:148px;overflow:hidden"><svg class="a" style="left:2px;top:2px" width="27" height="15" viewBox="-13.5 -14 27 15"><use href="#gg"/></svg><span style="left:46.2px">status5:0.0</span></div><div class="cell" style="left:758px;top:653px;width:148px;overflow:hidden"><svg class="a" style="left:2px;top:2px" width="27" height="15" viewBox="-13.5 -14 27 15"><use href="#gg"/><path d="M2.04,0.69 L12.48,-0.65 L1.96,-0.90Z" stroke="#000" stroke-width="0.9" fill="#000"/></svg><span style="left:34.5px">Timing Err%:12.7</span></div><div class="cell" style="left:908px;top:653px;width:148px;overflow:hidden"><svg class="a" style="left:2px;top:2px" width="27" height="15" viewBox="-13.5 -14 27 15"><use href="#gg"/><path d="M0.62,-2.06 L-1.09,-12.45 L-0.97,-1.92Z" stroke="#000" stroke-width="0.9" fill="#000"/></svg><span style="left:34.5px">AFR Target 1:14.7</span></div><div class="cell" style="left:1058px;top:653px;width:148px;overflow:hidden"><svg class="a" style="left:2px;top:2px" width="27" height="15" viewBox="-13.5 -14 27 15"><use href="#gg"/><path d="M2.04,0.69 L12.48,-0.65 L1.96,-0.90Z" stroke="#000" stroke-width="0.9" fill="#000"/></svg><span style="left:34.5px">Lost Sync Count:1.0</span></div><div class="cell" style="left:1208px;top:653px;width:148px;overflow:hidden"><svg class="a" style="left:2px;top:2px" width="27" height="15" viewBox="-13.5 -14 27 15"><use href="#gg"/></svg><span style="left:34.5px">Lost Sync Reason:0.0</span></div><div class="cell" style="left:8px;top:672px;width:148px;overflow:hidden"><svg class="a" style="left:2px;top:2px" width="27" height="15" viewBox="-13.5 -14 27 15"><use href="#gg"/></svg><span style="left:39.1px">InjTiming1:0.0</span></div><div class="cell" style="left:158px;top:672px;width:148px;overflow:hidden"><svg class="a" style="left:2px;top:2px" width="27" height="15" viewBox="-13.5 -14 27 15"><use href="#gg"/></svg><span style="left:39.1px">InjTiming2:0.0</span></div><div class="cell" style="left:308px;top:672px;width:148px;overflow:hidden"><svg class="a" style="left:2px;top:2px" width="27" height="15" viewBox="-13.5 -14 27 15"><use href="#gg"/></svg><span style="left:51.6px">PW3:0.0</span></div><div class="cell" style="left:458px;top:672px;width:148px;overflow:hidden"><svg class="a" style="left:2px;top:2px" width="27" height="15" viewBox="-13.5 -14 27 15"><use href="#gg"/></svg><span style="left:51.6px">PW4:0.0</span></div><div class="cell" style="left:608px;top:672px;width:148px;overflow:hidden"><svg class="a" style="left:2px;top:2px" width="27" height="15" viewBox="-13.5 -14 27 15"><use href="#gg"/></svg><span style="left:34.5px">VE Trim 1:100.0</span></div><div class="cell" style="left:758px;top:672px;width:148px;overflow:hidden"><svg class="a" style="left:2px;top:2px" width="27" height="15" viewBox="-13.5 -14 27 15"><use href="#gg"/></svg><span style="left:34.5px">VE Trim 2:100.0</span></div><div class="cell" style="left:908px;top:672px;width:148px;overflow:hidden"><svg class="a" style="left:2px;top:2px" width="27" height="15" viewBox="-13.5 -14 27 15"><use href="#gg"/></svg><span style="left:34.5px">VE Trim 3:100.0</span></div><div class="cell" style="left:1058px;top:672px;width:148px;overflow:hidden"><svg class="a" style="left:2px;top:2px" width="27" height="15" viewBox="-13.5 -14 27 15"><use href="#gg"/></svg><span style="left:34.5px">VE Trim 4:100.0</span></div><div class="cell" style="left:1208px;top:672px;width:148px;overflow:hidden"><svg class="a" style="left:2px;top:2px" width="27" height="15" viewBox="-13.5 -14 27 15"><use href="#gg"/></svg><span style="left:42.6px">Knock In:0.0</span></div><div class="cell" style="left:8px;top:691px;width:148px;overflow:hidden"><svg class="a" style="left:2px;top:2px" width="27" height="15" viewBox="-13.5 -14 27 15"><use href="#gg"/></svg><span style="left:34.5px">On/Off Outputs Status Indicator:0.0</span></div><div class="cell" style="left:158px;top:691px;width:148px;overflow:hidden"><svg class="a" style="left:2px;top:2px" width="27" height="15" viewBox="-13.5 -14 27 15"><use href="#gg"/></svg><span style="left:34.5px">PORTs BDE:194.0</span></div><div class="cell" style="left:308px;top:691px;width:148px;overflow:hidden"><svg class="a" style="left:2px;top:2px" width="27" height="15" viewBox="-13.5 -14 27 15"><use href="#gg"/><path d="M-1.02,-1.90 L-9.58,-8.03 L-2.05,-0.67Z" stroke="#000" stroke-width="0.9" fill="#000"/></svg><span style="left:37.2px">PORTs AM:4.0</span></div><div class="cell" style="left:458px;top:691px;width:148px;overflow:hidden"><svg class="a" style="left:2px;top:2px" width="27" height="15" viewBox="-13.5 -14 27 15"><use href="#gg"/><path d="M-1.96,-0.90 L-12.48,-0.65 L-2.04,0.69Z" stroke="#000" stroke-width="0.9" fill="#000"/></svg><span style="left:44.6px">PORT T:5.0</span></div><div class="cell" style="left:608px;top:691px;width:148px;overflow:hidden"><svg class="a" style="left:2px;top:2px" width="27" height="15" viewBox="-13.5 -14 27 15"><use href="#gg"/></svg><span style="left:39.4px">Trip Meter:0.0</span></div><div class="cell" style="left:758px;top:691px;width:148px;overflow:hidden"><svg class="a" style="left:2px;top:2px" width="27" height="15" viewBox="-13.5 -14 27 15"><use href="#gg"/></svg><span style="left:48.1px">Power:0.0</span></div><div class="cell" style="left:908px;top:691px;width:148px;overflow:hidden"><svg class="a" style="left:2px;top:2px" width="27" height="15" viewBox="-13.5 -14 27 15"><use href="#gg"/></svg><span style="left:47.0px">Torque:0.0</span></div><div class="a" style="left:6px;top:711px;width:1101px;height:20px;background:#fff"></div><div class="a" style="left:7px;top:712px;width:1099px;height:17px;border-top:1px solid #6E6E6E;border-left:1px solid #6E6E6E;border-right:1px solid #A0A0A0;border-bottom:1px solid #A0A0A0;background:#fff"></div><div class="a" style="left:10px;top:716px;width:453px;height:10px;background:#00f"></div><svg class="a" style="left:1110px;top:710px" width="250" height="22"><rect x="3" y="6" width="10" height="10" fill="#000"/><rect x="26" y="4" width="2" height="14" fill="#000"/><rect x="30" y="4" width="2" height="14" fill="#000"/><path d="M44,4 L57,11 L44,18Z" fill="#000"/><circle cx="93" cy="9" r="4.5" fill="none" stroke="#000" stroke-width="1.2"/><path d="M90.5,9 H95.5" stroke="#000" stroke-width="1.2"/><path d="M89.5,12.5 L85,17" stroke="#000" stroke-width="1.6"/><circle cx="114" cy="9" r="4.5" fill="none" stroke="#000" stroke-width="1.2"/><path d="M111.5,9 H116.5 M114,6.5 V11.5" stroke="#000" stroke-width="1.2"/><path d="M110.5,12.5 L106,17" stroke="#000" stroke-width="1.6"/><rect x="128" y="4" width="2.5" height="14" fill="#000"/><path d="M140,4 L130,11 L140,18Z" fill="#000"/><path d="M155,4 L148,11 L155,18Z M161,4 L154,11 L161,18Z" fill="#000"/><rect x="169" y="10" width="14" height="2" fill="#000"/><rect x="190" y="10" width="14" height="2" fill="#000"/><rect x="196" y="4" width="2" height="14" fill="#000"/><path d="M211,4 L218,11 L211,18Z M217,4 L224,11 L217,18Z" fill="#000"/><path d="M233,4 L243,11 L233,18Z" fill="#000"/><rect x="242.5" y="4" width="2.5" height="14" fill="#000"/></svg><div class="a" style="left:0;top:738px;width:1366px;height:30px;background:linear-gradient(#3168D5 0%,#4993E6 8%,#2157D7 20%,#2663E0 60%,#245EDC 90%,#1941A5 100%)"></div><div class="a" style="left:0;top:738px;width:97px;height:30px;border-radius:0 12px 12px 0;background:linear-gradient(#3C9E3C 0%,#6CC56C 10%,#3A9A3A 30%,#379537 70%,#2D7F2D 100%);box-shadow:inset -2px 0 3px #1e5a1e"></div><svg class="a" style="left:10px;top:745px" width="20" height="18"><path d="M2,3 Q5,1 9,3 L8,8 Q5,6 1,8Z" fill="#F35325"/><path d="M10,3 Q14,5 18,3 L17,8 Q13,10 9,8Z" fill="#81BC06"/><path d="M1,9 Q5,7 8,9 L7,14 Q4,12 0,14Z" fill="#05A6F0"/><path d="M9,9 Q13,11 17,9 L16,15 Q12,17 8,14Z" fill="#FFBA08"/></svg><div class="t" style="left:35px;top:742px;color:#fff;font-weight:bold;font-style:italic;font-size:19px;line-height:22px;letter-spacing:-0.8px;text-shadow:1px 1px 1px #1a4a1a">start</div><div class="a" style="left:107px;top:741px;width:159px;height:24px;border-radius:3px;background:linear-gradient(#5FA0F8 0%,#3C81F3 15%,#3A7CF0 80%,#2F6BE0 100%);box-shadow:inset -1px -1px 1px #1D4FBF"></div><svg class="a" style="left:115px;top:745px" width="16" height="16"><rect x="1" y="1" width="9" height="12" fill="#C9D6EA" stroke="#7D93B8"/><rect x="3" y="3" width="5" height="4" fill="#F0C020"/><path d="M7,10 L14,14 M9,14 L13,9" stroke="#5A6C88" stroke-width="1.5"/></svg><div class="t" style="left:134px;top:747px;color:#fff;font-size:11px;line-height:12px">TunerStudio MS v2.6....</div><div class="a" style="left:267px;top:741px;width:159px;height:24px;border-radius:3px;background:linear-gradient(#1E4FB8,#1F50B5);box-shadow:inset 1px 1px 2px #0B2F8A"></div><svg class="a" style="left:275px;top:745px" width="16" height="16"><rect x="0.5" y="0.5" width="15" height="15" fill="#fff" stroke="#000"/><polyline points="2,7 5,3 8,6 11,2 14,4" fill="none" stroke="#f00" stroke-width="1.5"/><polyline points="2,11 6,6 9,9 13,4" fill="none" stroke="#0c0" stroke-width="1.5"/><polyline points="2,9 5,7 8,11 12,7 14,9" fill="none" stroke="#00f" stroke-width="1.3"/><polyline points="2,14 6,11 10,13 14,10" fill="none" stroke="#ee0" stroke-width="1.5"/></svg><div class="t" style="left:294px;top:747px;color:#fff;font-size:11px;line-height:12px">MegaLogViewer MS Li...</div><div class="a" style="left:428px;top:741px;width:157px;height:24px;border-radius:3px;background:linear-gradient(#5FA0F8 0%,#3C81F3 15%,#3A7CF0 80%,#2F6BE0 100%);box-shadow:inset -1px -1px 1px #1D4FBF"></div><svg class="a" style="left:436px;top:745px" width="16" height="16"><circle cx="8" cy="8" r="7.5" fill="#DB4437"/><path d="M8,8 L1.5,11.8 A7.5,7.5 0 0,0 12,14.3Z" fill="#0F9D58"/><path d="M8,8 L14.5,4.3 A7.5,7.5 0 0,1 12,14.3Z" fill="#FFCD40"/><circle cx="8" cy="8" r="3.6" fill="#fff"/><circle cx="8" cy="8" r="2.8" fill="#4285F4"/></svg><div class="t" style="left:455px;top:747px;color:#fff;font-size:11px;line-height:12px">Miata Turbo Forum - ...</div><div class="a" style="left:1256px;top:738px;width:110px;height:30px;background:linear-gradient(#1290E8 0%,#21A3F1 10%,#0F96EC 30%,#0D8DE3 85%,#0B6CC8 100%);border-left:1px solid #0A5FC8;box-shadow:inset 1px 0 1px #3BB0F5"></div><svg class="a" style="left:1244px;top:744px" width="20" height="20"><circle cx="10" cy="10" r="9" fill="#3B8DF2" stroke="#fff" stroke-width="1.4"/><path d="M12,5.5 L7.5,10 L12,14.5" fill="none" stroke="#fff" stroke-width="2.4"/></svg><svg class="a" style="left:1265px;top:743px" width="40" height="22"><rect x="1" y="5" width="10" height="8" fill="#5C6F9C" stroke="#3A4A78"/><rect x="3" y="14" width="7" height="3" fill="#8B97C0"/><path d="M13,6 Q15,9 13,12 M16,4 Q19,9 16,14 M19,2 Q23,9 19,16" fill="none" stroke="#fff" stroke-width="1.2"/><path d="M22,3 Q24,14 30,16 L35,19" fill="none" stroke="#fff" stroke-width="2"/><rect x="30" y="15" width="7" height="5" fill="#E7D84A" transform="rotate(25 33 17)"/></svg><div class="t" style="left:1309px;top:747px;color:#fff;font-size:11px;line-height:12px">9:29 PM</div></body></html>
